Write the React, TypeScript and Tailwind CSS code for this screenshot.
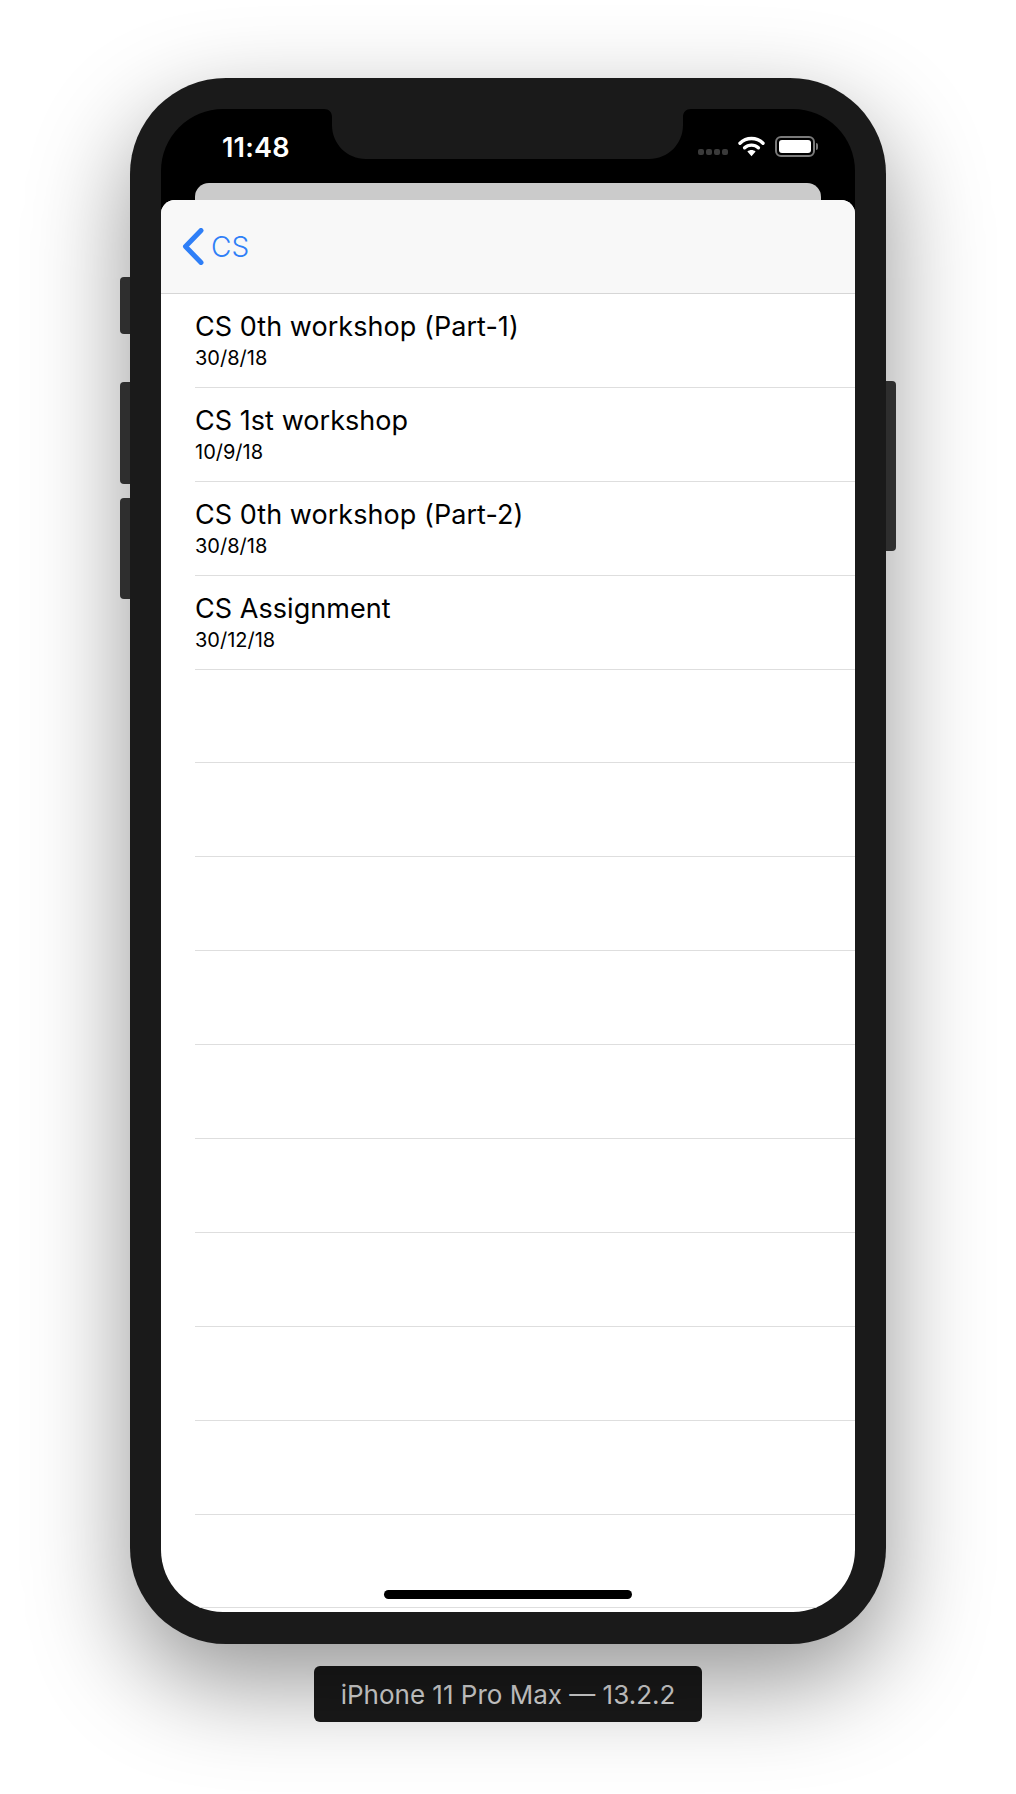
import React from 'react';

const ROWS = [
  { title: 'CS 0th workshop (Part-1)', date: '30/8/18' },
  { title: 'CS 1st workshop', date: '10/9/18' },
  { title: 'CS 0th workshop (Part-2)', date: '30/8/18' },
  { title: 'CS Assignment', date: '30/12/18' },
];

const EMPTY_ROWS = Array.from({ length: 10 }, (_, i) => i);

function Wifi() {
  return (
    <svg width="27" height="22" viewBox="0 0 27 22" fill="none">
      <path d="M2 8.2C8.4 2 18.6 2 25 8.2" stroke="white" strokeWidth="3.4" strokeLinecap="round" />
      <path d="M6.6 12.8C10.5 9.2 16.5 9.2 20.4 12.8" stroke="white" strokeWidth="3.4" strokeLinecap="round" />
      <path d="M9.4 16.6C11.8 14.6 15.2 14.6 17.6 16.6L13.5 21.2Z" fill="white" />
    </svg>
  );
}

function Battery() {
  return (
    <div className="flex items-center">
      <div className="w-[40px] h-[21px] rounded-[6px] border-2 border-[#7a7a7a] p-[2px]">
        <div className="w-full h-full rounded-[3px] bg-white" />
      </div>
      <div className="ml-[1px] w-[2px] h-[7px] rounded-r-[2px] bg-[#7a7a7a]" />
    </div>
  );
}

export default function App() {
  return (
    <div className="w-[1016px] h-[1794px] bg-white flex flex-col items-center overflow-hidden font-['Inter',sans-serif]">
      {/* device */}
      <div className="relative mt-[78px] w-[756px] h-[1566px] rounded-[96px] bg-[#1a1a1a] p-[31px] shadow-[0_38px_100px_rgba(0,0,0,0.42)]">
        <div className="absolute left-[-10px] top-[199px] w-[10px] h-[57px] rounded-l-[4px] bg-[#2e2e2e]" />
        <div className="absolute left-[-10px] top-[304px] w-[10px] h-[102px] rounded-l-[4px] bg-[#2e2e2e]" />
        <div className="absolute left-[-10px] top-[420px] w-[10px] h-[101px] rounded-l-[4px] bg-[#2e2e2e]" />
        <div className="absolute right-[-10px] top-[303px] w-[10px] h-[170px] rounded-r-[4px] bg-[#2e2e2e]" />

        {/* screen */}
        <div className="relative w-[694px] h-[1503px] rounded-[62px] bg-black overflow-hidden flex flex-col">
          <svg className="absolute left-[163px] top-0" width="367" height="50" viewBox="0 0 367 50">
            <path d="M0 0C5 0 8 3 8 8V16C8 35 23 50 42 50H325C344 50 359 35 359 16V8C359 3 362 0 367 0Z" fill="#1a1a1a" />
          </svg>

          {/* status bar */}
          <div className="h-[74px] shrink-0 flex items-start justify-between pl-[61px] pr-[37px] pt-[20px]">
            <span className="text-white text-[27px] leading-[38px] font-semibold tracking-[0.2px]">11:48</span>
            <div className="flex items-center pt-[6px]">
              <div className="flex gap-[2px] mr-[10px] mt-[12px]">
                <div className="w-[6px] h-[6px] rounded-[2px] bg-[#3a3a3a]" />
                <div className="w-[6px] h-[6px] rounded-[2px] bg-[#3a3a3a]" />
                <div className="w-[6px] h-[6px] rounded-[2px] bg-[#3a3a3a]" />
                <div className="w-[6px] h-[6px] rounded-[2px] bg-[#3a3a3a]" />
              </div>
              <div className="mr-[10px]"><Wifi /></div>
              <Battery />
            </div>
          </div>

          <div className="mx-[34px] h-[17px] shrink-0 rounded-t-[14px] bg-[#cbcbcb]" />

          {/* sheet */}
          <div className="flex-1 rounded-t-[14px] bg-white overflow-hidden">
            <div className="h-[94px] bg-[#f8f8f8] border-b border-[#d6d6d6] flex items-center pl-[21px]">
              <svg width="22" height="37" viewBox="0 0 22 37" fill="none">
                <path d="M19 2.5L3.5 18.5L19 34.5" stroke="#2f7ff7" strokeWidth="5" strokeLinecap="round" strokeLinejoin="round" />
              </svg>
              <span className="ml-[7px] text-[28px] leading-none text-[#2f7ff7] font-light">CS</span>
            </div>

            {ROWS.map(row => (
              <div key={row.title} className="pl-[34px]">
                <div className="h-[93.9px] border-b border-[#dedede] pt-[14px] text-black">
                  <div className="text-[27px] leading-[38px] tracking-[0.05px]">{row.title}</div>
                  <div className="text-[20px] leading-[24px]">{row.date}</div>
                </div>
              </div>
            ))}
            {EMPTY_ROWS.map(i => (
              <div key={i} className="pl-[34px]">
                <div className="h-[93.9px] border-b border-[#dedede]" />
              </div>
            ))}
          </div>

          <div className="absolute left-[223px] top-[1481px] w-[248px] h-[9px] rounded-full bg-black" />
        </div>
      </div>

      <div className="mt-[22px] w-[388px] h-[56px] rounded-[6px] bg-[#1a1a1a] flex items-center justify-center text-[26px] text-[#dedede]">
        iPhone 11 Pro Max — 13.2.2
      </div>
    </div>
  );
}
